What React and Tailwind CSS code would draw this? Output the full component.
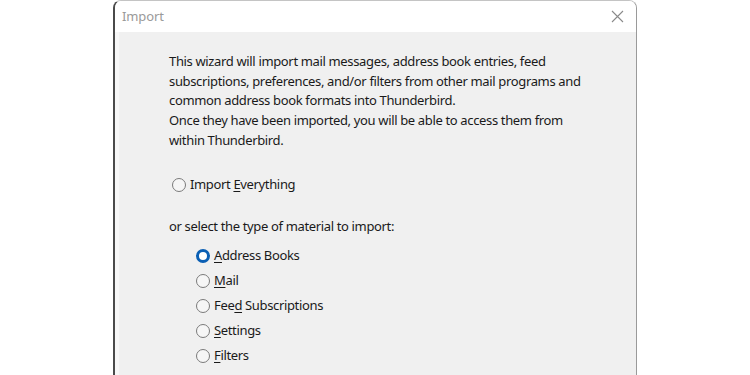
import React from "react";

function Radio({ checked }) {
  return checked ? (
    <span className="inline-block w-[14px] h-[14px] rounded-full border-[3.5px] border-[#0a5fb4] bg-white shrink-0" />
  ) : (
    <span className="inline-block w-[14px] h-[14px] rounded-full border border-[#7a7a7a] bg-[#f6f6f6] shrink-0" />
  );
}

function Option({ checked, pre, u, post }) {
  return (
    <div className="flex items-center h-[25px]">
      <Radio checked={checked} />
      <span className="ml-[4px]">
        {pre}
        <span className="underline underline-offset-[2px] decoration-[1px]">{u}</span>
        {post}
      </span>
    </div>
  );
}

export default function App() {
  const opts = [
    { checked: true, pre: "", u: "A", post: "ddress Books" },
    { checked: false, pre: "", u: "M", post: "ail" },
    { checked: false, pre: "Fee", u: "d", post: " Subscriptions" },
    { checked: false, pre: "", u: "S", post: "ettings" },
    { checked: false, pre: "", u: "F", post: "ilters" },
  ];
  return (
    <div className="w-[750px] h-[375px] bg-white overflow-hidden" style={{ fontFamily: '"Noto Sans", "Open Sans", sans-serif' }}>
      <div className="ml-[113px] w-[524px] h-[385px] flex flex-col rounded-t-[8px] border-l-2 border-l-[#4a4a4a] border-r border-r-[#9a9a9a] border-t border-t-[#c4c4c4] overflow-hidden">
        <div className="h-[31px] bg-white flex items-center justify-between pl-[7px] pr-[12px] shrink-0">
          <span className="text-[13px] text-[#9a9a9a] tracking-[-0.1px]">Import</span>
          <svg width="13" height="13" viewBox="0 0 13 13">
            <path d="M1 1 L12 12 M12 1 L1 12" stroke="#8a8a8a" strokeWidth="1.1" fill="none" />
          </svg>
        </div>
        <div className="flex-1 bg-[#f0f0f0] border-l-[4px] border-l-[#f7f7f7] pl-[50px] pt-[20px] text-[13px] tracking-[-0.35px] leading-[19.7px] text-[#1a1a1a]">
          <p>
            This wizard will import mail messages, address book entries, feed
            <br />
            subscriptions, preferences, and/or filters from other mail programs and
            <br />
            common address book formats into Thunderbird.
          </p>
          <p>
            Once they have been imported, you will be able to access them from
            <br />
            within Thunderbird.
          </p>
          <div className="mt-[24px] flex items-center h-[20px] pl-[3px]">
            <Radio checked={false} />
            <span className="ml-[4px]">
              Import <span className="underline underline-offset-[2px] decoration-[1px]">E</span>verything
            </span>
          </div>
          <p className="mt-[22px]">or select the type of material to import:</p>
          <div className="mt-[7px] pl-[27px] flex flex-col">
            {opts.map((o, i) => (
              <Option key={i} {...o} />
            ))}
          </div>
        </div>
      </div>
    </div>
  );
}
